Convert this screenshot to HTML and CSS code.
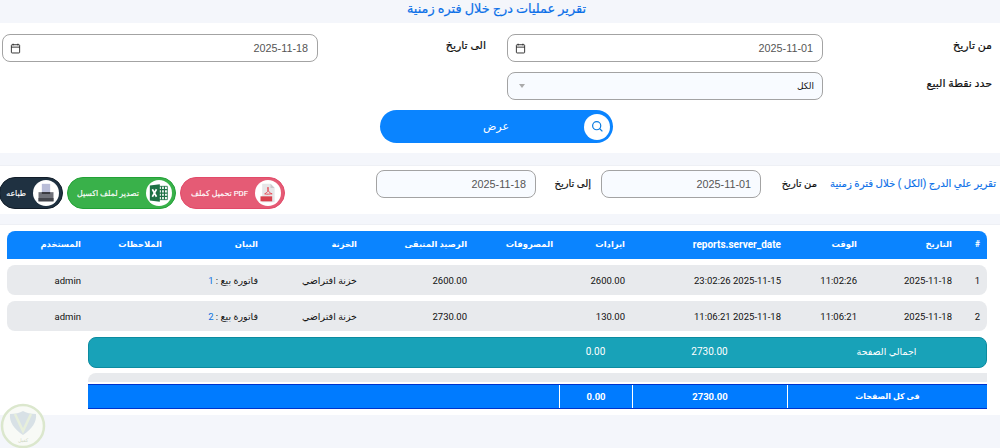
FILE: index.html
```html
<!DOCTYPE html>
<html lang="ar" dir="rtl">
<head>
  <meta charset="UTF-8">
  <title>تقرير عمليات درج خلال فتره زمنية</title>
  <link rel="stylesheet" href="styles.css">
</head>
<body>
  <div class="page-title">تقرير عمليات درج خلال فتره زمنية</div>

  <div class="card filter-card">
    <div class="filter-row">
      <label class="filter-label">من تاريخ</label>
      <div class="field date-field">
        <span>2025-11-01</span>
        <svg class="cal" viewBox="0 0 16 16"><path d="M4.500 1v2.500M11.500 1v2.500M2 6h12M3 2.500h10a1 1 0 0 1 1 1v10a1 1 0 0 1-1 1H3a1 1 0 0 1-1-1v-10a1 1 0 0 1 1-1z"/></svg>
      </div>
      <label class="filter-label second">الى تاريخ</label>
      <div class="field date-field">
        <span>2025-11-18</span>
        <svg class="cal" viewBox="0 0 16 16"><path d="M4.500 1v2.500M11.500 1v2.500M2 6h12M3 2.500h10a1 1 0 0 1 1 1v10a1 1 0 0 1-1 1H3a1 1 0 0 1-1-1v-10a1 1 0 0 1 1-1z"/></svg>
      </div>
    </div>
    <div class="filter-row">
      <label class="filter-label">حدد نقطة البيع</label>
      <div class="field select-field">
        <span>الكل</span>
        <i class="caret"></i>
      </div>
    </div>
    <button class="show-btn">
      <span class="show-icon">
        <svg viewBox="0 0 16 16"><circle cx="7" cy="7" r="5"/><path d="M10.800 10.800L14 14"/></svg>
      </span>
      <span class="show-text">عرض</span>
    </button>
  </div>

  <div class="card toolbar-card">
    <div class="report-name">تقرير علي الدرج (الكل ) خلال فترة زمنية</div>
    <label class="bar-label from">من تاريخ</label>
    <div class="field bar-date">2025-11-01</div>
    <label class="bar-label to">إلى تاريخ</label>
    <div class="field bar-date">2025-11-18</div>
    <div class="export-btns">
      <a class="pill pill-pdf">
        <span class="pill-icon">
          <svg viewBox="0 0 24 24">
            <path fill="#e6e6e8" d="M5 1h10l5 5v17H5z"/>
            <path fill="#c9c9cd" d="M15 1l5 5h-5z"/>
            <path fill="none" stroke="#e8505b" stroke-width="1.200" d="M8 13c3-1 5-4 4-8-1 3 1 7 5 8-3 0-6 1-9 0z"/>
            <rect x="3" y="16" width="14" height="6" fill="#d9414e"/>
          </svg>
        </span>
        <span>PDF تحميل كملف</span>
      </a>
      <a class="pill pill-excel">
        <span class="pill-icon">
          <svg viewBox="0 0 24 24">
            <path fill="#fff" stroke="#1e7145" d="M11 4h11v16H11z"/>
            <path stroke="#1e7145" stroke-width="1.500" d="M15 4v16M18.500 4v16M11 8h11M11 12h11M11 16h11"/>
            <path fill="#1e7145" d="M1 3l12-1.500v21L1 21z"/>
            <path fill="none" stroke="#fff" stroke-width="2" d="M4 7.500l5 9M9 7.500l-5 9"/>
          </svg>
        </span>
        <span>تصدير لملف اكسيل</span>
      </a>
      <a class="pill pill-print">
        <span class="pill-icon">
          <svg viewBox="0 0 24 24">
            <path fill="#b9bdd8" d="M7 1h10v12H7z"/>
            <path fill="#70727a" d="M3 11h18v11H3z"/>
            <path fill="#44464d" d="M3 18h18v4H3z"/>
            <path fill="#2f3036" d="M7 11h10v2H7z"/>
          </svg>
        </span>
        <span>طباعه</span>
      </a>
    </div>
  </div>

  <div class="card report-card">
    <table class="report-table">
      <thead>
        <tr>
          <th class="c-num">#</th>
          <th class="c-date">التاريخ</th>
          <th class="c-time">الوقت</th>
          <th class="c-server">reports.server_date</th>
          <th class="c-income">ايرادات</th>
          <th class="c-spent">المصروفات</th>
          <th class="c-balance">الرصيد المتبقى</th>
          <th class="c-safe">الخزنة</th>
          <th class="c-desc">البيان</th>
          <th class="c-notes">الملاحظات</th>
          <th class="c-user">المستخدم</th>
        </tr>
      </thead>
      <tbody>
        <tr>
          <td>1</td>
          <td>2025-11-18</td>
          <td>11:02:26</td>
          <td>2025-11-15 23:02:26</td>
          <td>2600.00</td>
          <td></td>
          <td>2600.00</td>
          <td>خزنة افتراضي</td>
          <td>فاتورة بيع : <a class="doc-link">1</a></td>
          <td></td>
          <td>admin</td>
        </tr>
        <tr>
          <td>2</td>
          <td>2025-11-18</td>
          <td>11:06:21</td>
          <td>2025-11-18 11:06:21</td>
          <td>130.00</td>
          <td></td>
          <td>2730.00</td>
          <td>خزنة افتراضي</td>
          <td>فاتورة بيع : <a class="doc-link">2</a></td>
          <td></td>
          <td>admin</td>
        </tr>
      </tbody>
    </table>

    <div class="totals">
      <div class="totals-row page-total">
        <div>اجمالي الصفحة</div>
        <div>2730.00</div>
        <div>0.00</div>
        <div></div>
      </div>
      <div class="totals-gap"></div>
      <div class="totals-row all-total">
        <div class="total-name">فى كل الصفحات</div>
        <div>2730.00</div>
        <div>0.00</div>
        <div></div>
      </div>
    </div>
  </div>

  <div class="watermark">
    <svg viewBox="0 0 46 46" width="46" height="46">
      <circle cx="23" cy="23" r="21" fill="#f8faf6" stroke="#dbe7cd" stroke-width="2.500"/>
      <path fill="#d8e1e6" d="M10 11c5 0 10-1 13-3 3 2 8 3 13 3 1 8-4 15-13 21-9-6-14-13-13-21z"/>
      <path fill="none" stroke="#e7efdb" stroke-width="2.500" d="M15 11l8 17 8-17"/>
      <text x="23" y="39" text-anchor="middle" class="watermark-text">كفيل</text>
    </svg>
  </div>
</body>
</html>
```

FILE: styles.css
```css
* { box-sizing: border-box; }
body {margin: 0;height: 448px;overflow: hidden;background: #f4f6fb;font-family: Roboto, "DejaVu Sans", sans-serif;font-size: 10px;color: #111;position: relative;}

.page-title {height: 23px;line-height: 18px;text-align: center;font-size: 12.800px;color: #0a6fe8;padding-right: 7px;-webkit-text-stroke: .2px #0a6fe8;}
.card {background: #fff;}

.filter-card {height: 130px;padding-top: 11px;}
.filter-row {display: flex;align-items: flex-start;height: 38px;}
.filter-label {width: 177px;padding: 5px 8px 0 0;font-size: 11px;-webkit-text-stroke: .2px #111;}
.filter-label.second {width: 189px;padding-right: 21px;}
.field {border: 1px solid #a3a3a3;border-radius: 8px;font-family: "Liberation Sans", sans-serif;font-size: 10.800px;color: #555;}
.date-field {width: 316px;height: 28px;display: flex;justify-content: space-between;align-items: center;padding: 0 9px 0 7px;}
.cal {width: 11px;height: 11px;fill: none;stroke: #222;stroke-width: 1.300;}
.select-field {width: 316px;height: 28px;display: flex;justify-content: space-between;align-items: center;padding: 0 8px 0 11px;background: #f8fbff;font-family: "DejaVu Sans", sans-serif;font-size: 9px;color: #111;}
.caret {border: 3px solid transparent;border-top: 4px solid #aaa;border-bottom: 0;}

.show-btn {display: flex;align-items: center;justify-content: flex-start;width: 233px;height: 33px;margin: 0 387px 0 0;padding: 0 3px 0 0;background: #0a84ff;border: 0;border-radius: 17px;color: #fff;font-family: "DejaVu Sans", sans-serif;font-size: 11px;}
.show-icon {width: 26px;height: 26px;background: #fff;border-radius: 50%;display: flex;align-items: center;justify-content: center;flex: none;}
.show-icon svg {width: 13px;height: 13px;fill: none;stroke: #0a7be0;stroke-width: 1.500;}
.show-text {flex: 1;text-align: center;padding-left: 28px;}

.toolbar-card {height: 49px;margin-top: 12px;display: flex;align-items: flex-start;padding-top: 4px;border-top: 1px solid #eef0f5;}
.report-name {width: 183px;padding: 7px 4px 0 0;font-size: 10.100px;line-height: 14px;color: #0a6fe8;white-space: nowrap;-webkit-text-stroke: .15px #0a6fe8;}
.bar-label {font-size: 10px;padding-top: 7px;line-height: 14px;white-space: nowrap;-webkit-text-stroke: .2px #111;}
.bar-label.from {width: 56px;}
.bar-label.to {width: 55px;margin-right: 10px;}
.bar-date {width: 160px;height: 28px;line-height: 26px;padding-right: 9px;background: #f8fbff;}
.export-btns {display: flex;gap: 4px;margin: 7px auto 0 -1px;}
.pill {display: flex;align-items: center;gap: 7px;height: 32px;padding: 0 3px 0 0;border-radius: 16px;font-size: 7.800px;color: #fff;white-space: nowrap;-webkit-text-stroke: .15px #fff;}
.pill-icon {width: 26px;height: 26px;border-radius: 50%;background: #fff;display: flex;align-items: center;justify-content: center;flex: none;}
.pill-icon svg {width: 20px;height: 20px;}
.pill-pdf {width: 105px;background: #e55b75;border: 1px solid #e24a69;}
.pill-excel {width: 109px;background: #39b14a;border: 1px solid #22a136;}
.pill-print {width: 64px;background: #1f3141;border: 1px solid #111c28;}

.report-card {margin-top: 10px;height: 191px;padding: 0 13px 0 7px;border-top: 1px solid #eef0f5;}
.report-table {width: 980px;border-collapse: separate;border-spacing: 0 6px;table-layout: fixed;font-size: 9.500px;}
.report-table th {height: 28px;padding: 0 7px 2px 0;background: #0a84ff;color: #fff;font-weight: bold;font-size: 8.400px;text-align: right;white-space: nowrap;}
.report-table th:first-child {border-top-right-radius: 8px;}
.report-table th:last-child {border-top-left-radius: 8px;}
.report-table td {height: 30px;padding: 0 7px 0 0;background: #e8eaed;text-align: right;white-space: nowrap;}
.report-table td:first-child {border-radius: 0 8px 8px 0;}
.report-table td:last-child {border-radius: 8px 0 0 8px;}
.doc-link {color: #0b6fe0;}
.c-num {width: 28px;}
.c-date {width: 95px;}
.c-time {width: 76px;}
.report-table th.c-server {width: 156px;font-size: 10px;}
.c-income {width: 72px;}
.c-spent {width: 86px;}
.c-balance {width: 110px;}
.c-safe {width: 99px;}
.c-desc {width: 96px;}
.c-notes {width: 81px;}
.c-user {width: 81px;}

.totals {width: 899px;}
.totals-row {display: grid;grid-template-columns: 199px 155px 73px 1fr;text-align: center;}
.page-total {height: 31px;line-height: 28px;background: #18a2b8;border: 1px solid #0c8ba0;border-radius: 8px;color: #fff;font-size: 10px;}
.page-total div:first-child {font-size: 9.500px;}
.totals-gap {height: 9px;margin: 5px 0 2px;background: #e8eaed;border-radius: 8px 0 0 0;}
.all-total {height: 25px;line-height: 23px;background: #007bff;border-top: 1px solid #0033cc;border-bottom: 1px solid #0033cc;color: #fff;font-weight: bold;font-size: 9.500px;}
.all-total .total-name {font-size: 7.900px;}
.all-total div + div {border-right: 1px solid #fff;}

.watermark {position: absolute;left: 0;top: 403px;}
.watermark-text {font-size: 5px;fill: #cfd8c4;}
```
